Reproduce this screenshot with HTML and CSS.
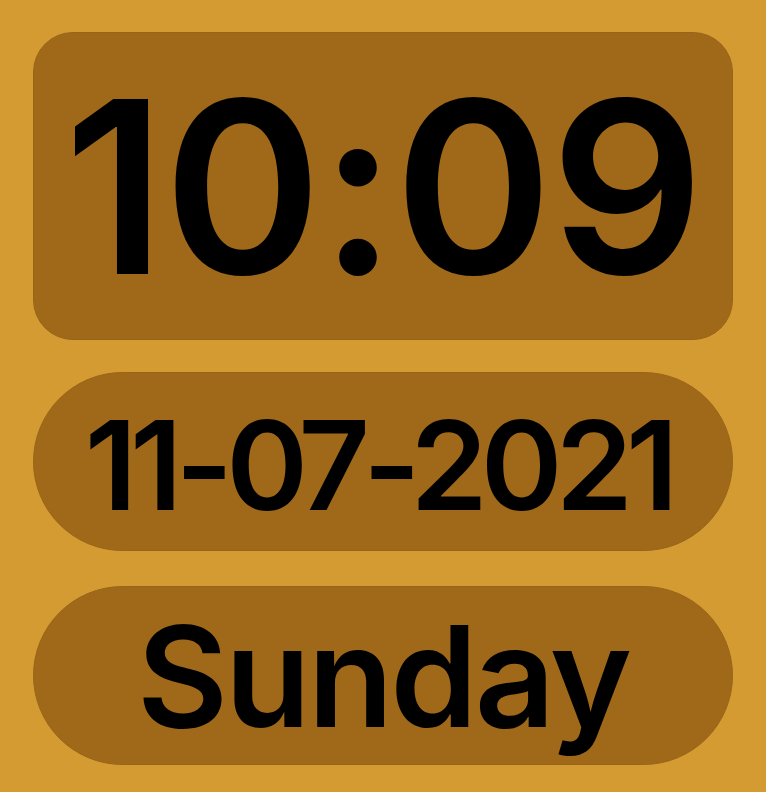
FILE: index.html
```html
<!DOCTYPE html>
<html>
<head>
    <meta charset="utf-8">
    <title>Clock</title>
    <link rel="stylesheet" href="styles.css">
</head>
<body>
    <main class="clock">
        <section class="panel time">10:09</section>
        <section class="panel pill date">11-07-2021</section>
        <section class="panel pill day">Sunday</section>
    </main>
</body>
</html>
```

FILE: styles.css
```css
*{
    box-sizing: border-box;
    padding: 0;
    margin: 0;
}
body{
    background: #d49b33;
    font-family: Inter, "Noto Sans", sans-serif;
    color: #000;
}
.clock{
    display: flex;
    flex-direction: column;
    padding: 32px 33px 0 33px;
}
.panel{
    display: flex;
    justify-content: center;
    align-items: center;
    background: #a0691a;
    border: 1px solid #9a6418;
    line-height: 1;
    font-weight: 600;
}
.time{
    height: 308px;
    border-radius: 40px;
    font-size: 240px;
    letter-spacing: -2px;
    padding-top: 2px;
}
.pill{
    height: 179px;
    border-radius: 90px;
}
.date{
    margin-top: 32px;
    font-size: 124px;
    letter-spacing: -7px;
    padding: 6px 10px 0 0;
}
.day{
    margin-top: 35px;
    font-size: 140px;
    letter-spacing: -3px;
}
```
